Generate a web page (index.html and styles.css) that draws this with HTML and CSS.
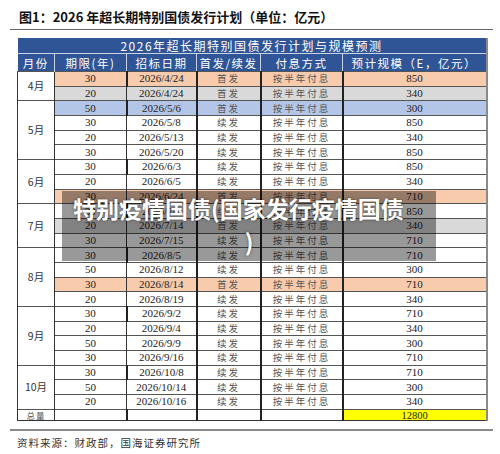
FILE: index.html
```html
<!DOCTYPE html>
<html lang="zh">
    <head>
        <meta charset="UTF-8" />
        <meta name="viewport" content="width=device-width, initial-scale=1.0" />
        <title>2026年超长期特别国债发行计划</title>
        <link rel="stylesheet" href="styles.css">
    </head>
    <body>
        <div class="page">
            <h1 class="fig-title">图1：2026 年超长期特别国债发行计划（单位：亿元）</h1>

            <table class="plan">
                <colgroup>
                    <col class="c-month" />
                    <col class="c-term" />
                    <col class="c-date" />
                    <col class="c-type" />
                    <col class="c-pay" />
                    <col class="c-size" />
                </colgroup>
                <tr class="caption-row">
                    <th colspan="6">2026年超长期特别国债发行计划与规模预测</th>
                </tr>
                <tr class="head-row">
                    <th>月份</th>
                    <th>期限(年)</th>
                    <th>招标日期</th>
                    <th>首发/续发</th>
                    <th>付息方式</th>
                    <th>预计规模（E，亿元）</th>
                </tr>
                <!-- 4月 -->
                <tr class="orange">
                    <td class="month" rowspan="2">4月</td>
                    <td>30</td><td>2026/4/24</td><td class="cn">首发</td><td class="cn">按半年付息</td><td>850</td>
                </tr>
                <tr class="gray">
                    <td>20</td><td>2026/4/24</td><td class="cn">首发</td><td class="cn">按半年付息</td><td>340</td>
                </tr>
                <!-- 5月 -->
                <tr class="blue">
                    <td class="month" rowspan="4">5月</td>
                    <td>50</td><td>2026/5/6</td><td class="cn">首发</td><td class="cn">按半年付息</td><td>300</td>
                </tr>
                <tr>
                    <td>30</td><td>2026/5/8</td><td class="cn">续发</td><td class="cn">按半年付息</td><td>850</td>
                </tr>
                <tr>
                    <td>20</td><td>2026/5/13</td><td class="cn">续发</td><td class="cn">按半年付息</td><td>340</td>
                </tr>
                <tr>
                    <td>30</td><td>2026/5/20</td><td class="cn">续发</td><td class="cn">按半年付息</td><td>850</td>
                </tr>
                <!-- 6月 -->
                <tr>
                    <td class="month" rowspan="3">6月</td>
                    <td>30</td><td>2026/6/3</td><td class="cn">续发</td><td class="cn">按半年付息</td><td>850</td>
                </tr>
                <tr>
                    <td>20</td><td>2026/6/5</td><td class="cn">续发</td><td class="cn">按半年付息</td><td>340</td>
                </tr>
                <tr class="orange">
                    <td>30</td><td>2026/6/24</td><td class="cn">首发</td><td class="cn">按半年付息</td><td>710</td>
                </tr>
                <!-- 7月 -->
                <tr>
                    <td class="month" rowspan="3">7月</td>
                    <td>30</td><td>2026/7/3</td><td class="cn">续发</td><td class="cn">按半年付息</td><td>850</td>
                </tr>
                <tr class="gray">
                    <td>20</td><td>2026/7/14</td><td class="cn">首发</td><td class="cn">按半年付息</td><td>340</td>
                </tr>
                <tr>
                    <td>30</td><td>2026/7/15</td><td class="cn">续发</td><td class="cn">按半年付息</td><td>710</td>
                </tr>
                <!-- 8月 -->
                <tr>
                    <td class="month" rowspan="4">8月</td>
                    <td>30</td><td>2026/8/5</td><td class="cn">续发</td><td class="cn">按半年付息</td><td>710</td>
                </tr>
                <tr>
                    <td>50</td><td>2026/8/12</td><td class="cn">续发</td><td class="cn">按半年付息</td><td>300</td>
                </tr>
                <tr class="orange">
                    <td>30</td><td>2026/8/14</td><td class="cn">首发</td><td class="cn">按半年付息</td><td>710</td>
                </tr>
                <tr>
                    <td>20</td><td>2026/8/19</td><td class="cn">续发</td><td class="cn">按半年付息</td><td>340</td>
                </tr>
                <!-- 9月 -->
                <tr>
                    <td class="month" rowspan="4">9月</td>
                    <td>30</td><td>2026/9/2</td><td class="cn">续发</td><td class="cn">按半年付息</td><td>710</td>
                </tr>
                <tr>
                    <td>20</td><td>2026/9/4</td><td class="cn">续发</td><td class="cn">按半年付息</td><td>340</td>
                </tr>
                <tr>
                    <td>50</td><td>2026/9/9</td><td class="cn">续发</td><td class="cn">按半年付息</td><td>300</td>
                </tr>
                <tr>
                    <td>30</td><td>2026/9/16</td><td class="cn">续发</td><td class="cn">按半年付息</td><td>710</td>
                </tr>
                <!-- 10月 -->
                <tr>
                    <td class="month" rowspan="3">10月</td>
                    <td>30</td><td>2026/10/8</td><td class="cn">续发</td><td class="cn">按半年付息</td><td>710</td>
                </tr>
                <tr>
                    <td>50</td><td>2026/10/14</td><td class="cn">续发</td><td class="cn">按半年付息</td><td>300</td>
                </tr>
                <tr>
                    <td>20</td><td>2026/10/16</td><td class="cn">续发</td><td class="cn">按半年付息</td><td>340</td>
                </tr>
                <tr class="total-row">
                    <td class="total-label">总量</td>
                    <td></td><td></td><td></td><td></td><td class="total">12800</td>
                </tr>
            </table>

            <p class="source">资料来源：财政部，国海证券研究所</p>

            <!-- 盖在表格上的半透明标题 -->
            <div class="overlay">
                <span class="ov-line ov-first">特别疫情国债(国家发行疫情国债</span>
                <span class="ov-line ov-last">)</span>
            </div>
        </div>
    </body>
</html>
```

FILE: styles.css
```css
* {
    margin: 0;
    padding: 0;
}

body {
    background-color: #fff;
    font-family: "Liberation Serif", "Noto Sans CJK SC", serif;
    color: #222;
}

.page {
    position: relative;
    width: 483px;
    padding: 8px 0 0 10px;
}

/* 图标题 */
.fig-title {
    font-family: "Noto Sans CJK SC", sans-serif;
    font-size: 13px;
    font-weight: bold;
    line-height: 18px;
    color: #111;
    padding: 0 0 3px 9px;
    border-bottom: 1px solid #666;
}

/* 表格 */
.plan {
    margin: 8px 0 0 7px;
    width: 469px;
    border-collapse: collapse;
    table-layout: fixed;
    border-right: 2px solid #8a8a8a;
}

.c-month { width: 37px; }
.c-term { width: 72px; }
.c-date { width: 70px; }
.c-type { width: 64px; }
.c-pay { width: 82px; }
.c-size { width: 144px; }

.plan th {
    background-color: #2f5597;
    color: #fff;
    font-family: "Noto Sans CJK SC", sans-serif;
    font-weight: normal;
    padding: 0;
}

.caption-row th {
    height: 15px;
    font-size: 12px;
    line-height: 12px;
    letter-spacing: 1.5px;
    border-bottom: 1px solid #c9d3e6;
}

.head-row th {
    height: 17px;
    font-size: 11.5px;
    line-height: 12px;
    letter-spacing: 1.5px;
    border-left: 1px solid #c9d3e6;
}

.head-row th:first-child {
    border-left: none;
}

.plan td {
    height: 13.7px;
    font-size: 11px;
    line-height: 9px;
    text-align: center;
    vertical-align: middle;
    border-top: 1px solid #555;
    border-left: 1px solid #333;
    padding: 0;
    overflow: hidden;
    white-space: nowrap;
}

.plan td:nth-child(n+3) {
    border-left: 2px solid #222;
}

.plan td.month {
    border-left: 1px solid #333;
    font-family: "Noto Sans CJK SC", sans-serif;
    font-size: 10.5px;
    line-height: 12px;
    color: #333;
    background-color: #fff;
}

.plan td.cn {
    font-family: "Noto Sans CJK SC", sans-serif;
    font-size: 9.5px;
    letter-spacing: 2px;
    color: #555;
}

.orange td { background-color: #f8cbad; }
.gray td { background-color: #d9d9d9; }
.blue td { background-color: #b4c6e7; }

.total-row td {
    height: 10.5px;
    border-bottom: 1px solid #333;
}

.plan td.total-label {
    font-family: "Noto Sans CJK SC", sans-serif;
    font-size: 8.5px;
    letter-spacing: 1px;
    color: #555;
}

.plan td.total {
    background-color: #ffff00;
    font-size: 10.5px;
}

/* 资料来源 */
.source {
    margin-top: 8px;
    border-top: 2px solid #8a8a8a;
    padding: 4px 0 0 7px;
    font-family: "Noto Sans CJK SC", sans-serif;
    font-size: 10.5px;
    line-height: 15px;
    letter-spacing: 1px;
    color: #333;
}

/* 半透明浮层 */
.overlay {
    position: absolute;
    left: 62px;
    top: 191px;
    width: 374px;
    height: 70px;
    background-color: rgba(0, 0, 0, 0.4);
    color: #fff;
    font-family: "Noto Sans CJK SC", sans-serif;
    font-size: 23px;
    font-weight: bold;
    line-height: 33px;
    padding-top: 1px;
    box-sizing: border-box;
    text-shadow: 0 0 3px rgba(0, 0, 0, 0.5);
}

.ov-line {
    display: block;
    white-space: nowrap;
}

.ov-first {
    padding-left: 11px;
}

.ov-last {
    text-align: center;
}
```
